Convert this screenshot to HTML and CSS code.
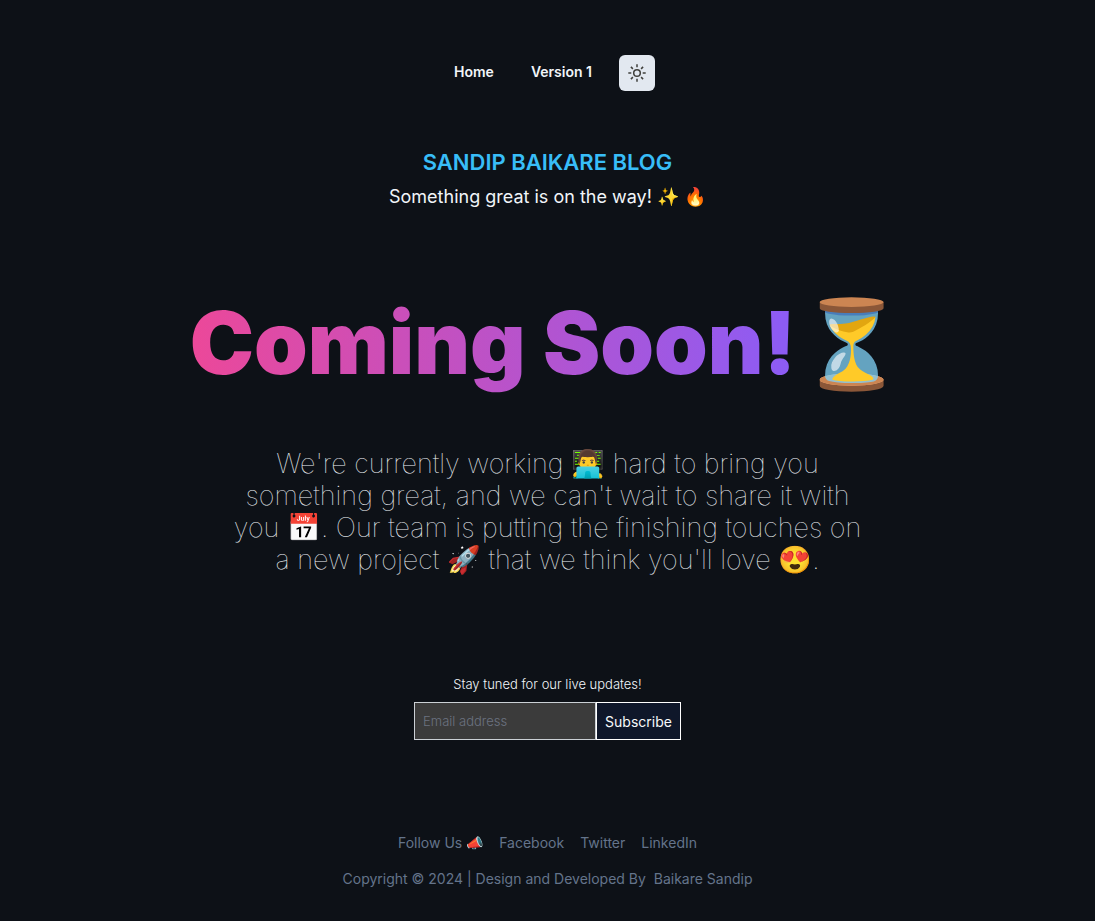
FILE: index.html
```html
<!DOCTYPE html>
<html lang="en">
<head>
<meta charset="utf-8">
<title>Sandip Baikare Blog</title>
<link rel="stylesheet" href="styles.css">
</head>
<body>
<header class="site-header">
<nav class="nav">
<a class="nav-link" href="#">Home</a>
<a class="nav-link" href="#">Version 1</a>
<button class="theme-toggle" type="button" aria-label="Toggle theme">
<svg viewBox="0 0 20 20" width="20" height="20" fill="none" stroke="currentColor" stroke-width="1.5"><circle cx="10" cy="10" r="3.3"/><path d="M10 1.3v3M10 15.7v3M1.3 10h3M15.7 10h3M3.9 3.9l2 2M14.1 14.1l2 2M3.9 16.1l2-2M14.1 5.9l2-2"/></svg>
</button>
</nav>
</header>
<main class="main">
<p class="brand">SANDIP BAIKARE BLOG</p>
<p class="tagline">Something great is on the way! ✨ 🔥</p>
<h1 class="title"><span class="title-text">Coming Soon!</span><span>⏳</span></h1>
<p class="lead">We're currently working 👨‍💻 hard to bring you something great, and we can't wait to share it with you 📅. Our team is putting the finishing touches on a new project 🚀 that we think you'll love 😍.</p>
<form class="signup">
<label class="signup-label" for="email">Stay tuned for our live updates!</label>
<div class="signup-row">
<input class="signup-input" id="email" type="email" placeholder="Email address">
<button class="signup-button" type="submit">Subscribe</button>
</div>
</form>
</main>
<footer class="footer">
<div class="footer-links"><span>Follow Us 📣</span><a href="#">Facebook</a><a href="#">Twitter</a><a href="#">LinkedIn</a></div>
<p class="copyright">Copyright © 2024 | Design and Developed By &nbsp;<a href="#">Baikare Sandip</a></p>
</footer>
</body>
</html>
```

FILE: styles.css
```css
* { box-sizing: border-box; margin: 0; }
body { background: #0d1117; color: #f1f5f9; font-family: Inter, sans-serif; font-optical-sizing: none; font-size: 14px; line-height: 20px; text-align: center; }
a { color: inherit; text-decoration: none; }
.site-header { padding-top: 55px; }
.nav { display: flex; justify-content: center; gap: 9px; }
.nav-link { padding: 7px 14px; font-weight: 600; }
.theme-toggle { display: grid; place-items: center; width: 36px; height: 36px; margin-left: 4px; padding: 0; border: 0; border-radius: 6px; background: #e2e8f0; color: #3f3f3b; }
.main { padding-top: 54px; }
.brand { color: #38bdf8; font-size: 22px; font-weight: 600; line-height: 34px; }
.tagline { font-size: 18px; line-height: 36px; }
.title { display: flex; flex-wrap: wrap; justify-content: center; gap: 2px; margin-top: 80px; font-size: 86px; font-weight: 900; line-height: 96px; }
.title-text { padding-bottom: 8px; background: linear-gradient(to right, #ec4899, #8b5cf6); background-clip: text; color: transparent; }
.lead { max-width: 644px; margin: 49px auto 0; font-size: 27px; font-weight: 100; line-height: 32px; }
.signup { margin-top: 98px; }
.signup-label { display: block; font-size: 13px; font-weight: 300; }
.signup-row { display: flex; justify-content: center; margin-top: 8px; }
.signup-input { width: 182px; height: 38px; padding: 8px; border: 1px solid #cbd0d5; border-radius: 0; background: #3b3b3b; color: #f1f5f9; font: 300 13px Inter, sans-serif; }
.signup-input::placeholder { color: #6b7280; }
.signup-button { height: 38px; padding: 0 8px; border: 1px solid #fff; background: #0f172a; color: #f8fafc; font: 14px Inter, sans-serif; }
.footer { padding: 93px 0 32px; color: #64748b; }
.footer-links { display: flex; justify-content: center; gap: 16px; }
.copyright { margin-top: 16px; }
```
